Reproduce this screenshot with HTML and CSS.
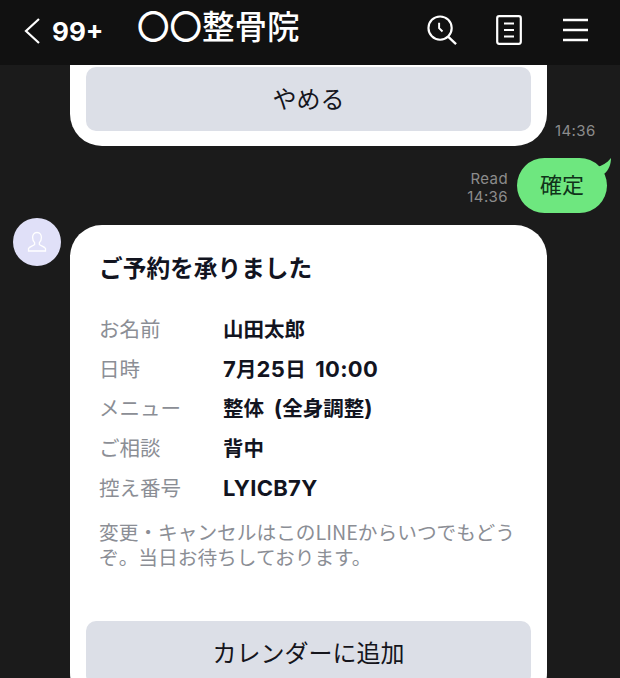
FILE: index.html
```html
<!DOCTYPE html>
<html lang="ja">
<head>
<meta charset="utf-8">
<title>LINE</title>
<link rel="stylesheet" href="styles.css">
</head>
<body>
<div class="app">
  <header class="topbar">
    <svg class="back" viewBox="0 0 18 28" width="18" height="28"><path d="M16 2 L3 14 L16 26" fill="none" stroke="#fff" stroke-width="2.2"/></svg>
    <span class="count">99+</span>
    <span class="title">〇〇整骨院</span>
    <div class="actions">
      <svg class="ic-search" viewBox="0 0 32 32" width="31" height="31"><circle cx="13.5" cy="13.5" r="12" fill="none" stroke="#fff" stroke-width="2.2"/><path d="M21.5 22 L30 30" stroke="#fff" stroke-width="2.4" fill="none"/><path d="M12.5 8 V13.5 L16 17" stroke="#fff" stroke-width="2" fill="none"/></svg>
      <svg class="ic-note" viewBox="0 0 26 30" width="26" height="30"><rect x="1.2" y="1.2" width="23.6" height="27.6" rx="2" fill="none" stroke="#fff" stroke-width="2.2"/><path d="M8 8.5 H18 M8 15 H18 M8 21.5 H18" stroke="#fff" stroke-width="2.2"/></svg>
      <svg class="ic-menu" viewBox="0 0 25 24" width="25" height="24"><path d="M0 2 H25 M0 12 H25 M0 22 H25" stroke="#fff" stroke-width="2.4"/></svg>
    </div>
  </header>
  <main class="chat">
    <div class="row-top">
      <div class="bubble card-top"><div class="btn">やめる</div></div>
      <time class="stamp stamp-top">14:36</time>
    </div>
    <div class="row-me">
      <div class="meta"><span>Read</span><span>14:36</span></div>
      <div class="green">確定
        <svg class="tail" viewBox="0 0 16 16" width="16" height="16"><path d="M0 9 C6 8 11 5 15 0 C15 6 13 12 8 16 Z" fill="#6ee77f"/></svg>
      </div>
    </div>
    <div class="row-in">
      <div class="avatar">
        <svg viewBox="0 0 20 22" width="20" height="22"><path d="M10 1.5 C6.8 1.5 5.6 4 5.6 6.5 C5.6 9 6.6 10.6 7.6 11.6 L7.6 13.5 C6 15 2.5 15.8 1.5 17.5 L1.5 20 H18.5 L18.5 17.5 C17.5 15.8 14 15 12.4 13.5 L12.4 11.6 C13.4 10.6 14.4 9 14.4 6.5 C14.4 4 13.2 1.5 10 1.5 Z" fill="none" stroke="#fff" stroke-width="1.3"/></svg>
      </div>
      <article class="bubble card">
        <h2 class="heading">ご予約を承りました</h2>
        <dl class="details">
          <div class="line"><dt>お名前</dt><dd>山田太郎</dd></div>
          <div class="line"><dt>日時</dt><dd><span class="lat">7</span>月<span class="lat">25</span>日 <span class="lat">10:00</span></dd></div>
          <div class="line"><dt>メニュー</dt><dd>整体 <span class="lat">(</span>全身調整<span class="lat">)</span></dd></div>
          <div class="line"><dt>ご相談</dt><dd>背中</dd></div>
          <div class="line"><dt>控え番号</dt><dd><span class="lat">LYICB7Y</span></dd></div>
        </dl>
        <p class="note">変更・キャンセルはこのLINEからいつでもどうぞ。当日お待ちしております。</p>
        <div class="btn">カレンダーに追加</div>
      </article>
    </div>
  </main>
</div>
</body>
</html>
```
FILE: styles.css
```css
* { box-sizing: border-box; margin: 0; padding: 0; }
html, body { width: 620px; height: 678px; overflow: hidden; }
body { background: #1b1b1b; font-family: "Inter", "Noto Sans CJK JP", sans-serif; }
.app { width: 620px; height: 678px; display: flex; flex-direction: column; overflow: hidden; }
.topbar { flex: none; height: 65px; background: #111; color: #fff; display: flex; align-items: center; padding: 0 0 5px 23px; position: relative; z-index: 1; }
.back { flex: none; margin-top: 2px; }
.count { font-size: 26px; font-weight: 700; margin-left: 11px; width: 52px; margin-top: 2px; }
.title { font-size: 32.5px; font-weight: 500; margin-left: 33px; line-height: 1; margin-top: -3px; }
.actions { margin-left: auto; display: flex; align-items: center; gap: 38px; padding-right: 32px; }
.ic-search { margin-right: 0; }
.ic-menu { margin-left: 3px; }
.chat { flex: 1; min-height: 0; display: flex; flex-direction: column; }
.bubble { background: #fff; border-radius: 32px; }
.row-top { display: flex; align-items: flex-end; padding-left: 70px; }
.card-top { width: 477px; padding: 2px 16px 15px; border-radius: 0 0 32px 32px; }
.btn { height: 64px; border-radius: 10px; background: #dcdfe7; color: #15151c; display: flex; align-items: center; justify-content: center; font-size: 24px; padding-bottom: 4px; font-family: "Noto Sans CJK JP", sans-serif; }
.stamp { color: #8c8c8c; font-size: 15px; letter-spacing: 0.4px; }
.stamp-top { margin-left: 8px; margin-bottom: 6px; }
.row-me { display: flex; justify-content: flex-end; align-items: flex-end; padding-right: 13px; margin-top: 12px; }
.meta { display: flex; flex-direction: column; align-items: flex-end; color: #8c8c8c; font-size: 15px; letter-spacing: 0.4px; line-height: 18px; margin-right: 9px; margin-bottom: 7px; }
.green { position: relative; width: 90px; height: 55px; border-radius: 28px; background: #6ee77f; color: #10331a; display: flex; align-items: center; justify-content: center; font-size: 22px; padding-bottom: 6px; font-family: "Noto Sans CJK JP", sans-serif; }
.tail { position: absolute; right: -5px; top: 0; }
.row-in { display: flex; align-items: flex-start; padding-left: 13px; margin-top: 12px; }
.avatar { flex: none; width: 48px; height: 48px; border-radius: 50%; background: #e0e0f8; display: flex; align-items: center; justify-content: center; margin-top: -7px; }
.card { width: 477px; margin-left: 9px; padding: 26px 16px 0; flex: none; height: 480px; }
.heading { font-size: 23.7px; font-weight: 700; color: #12141f; margin-left: 13px; line-height: 32px; font-family: "Noto Sans CJK JP", sans-serif; }
.details { margin: 25.5px 0 0 13px; display: flex; flex-direction: column; }
.line { display: flex; align-items: center; height: 39.6px; }
dt { width: 124px; color: #8b8e95; font-size: 20.5px; font-family: "Noto Sans CJK JP", sans-serif; }
dd { color: #12141f; font-size: 20.5px; font-weight: 700; word-spacing: 5px; font-family: "Noto Sans CJK JP", sans-serif; }
.lat { font-family: "Inter", sans-serif; font-size: 22px; letter-spacing: 0.3px; }
.note { margin: 13px 0 0 13px; width: 425px; color: #8b8e95; font-size: 19.7px; line-height: 25px; font-family: "Noto Sans CJK JP", sans-serif; }
.card .btn { margin-top: 52px; }
```
